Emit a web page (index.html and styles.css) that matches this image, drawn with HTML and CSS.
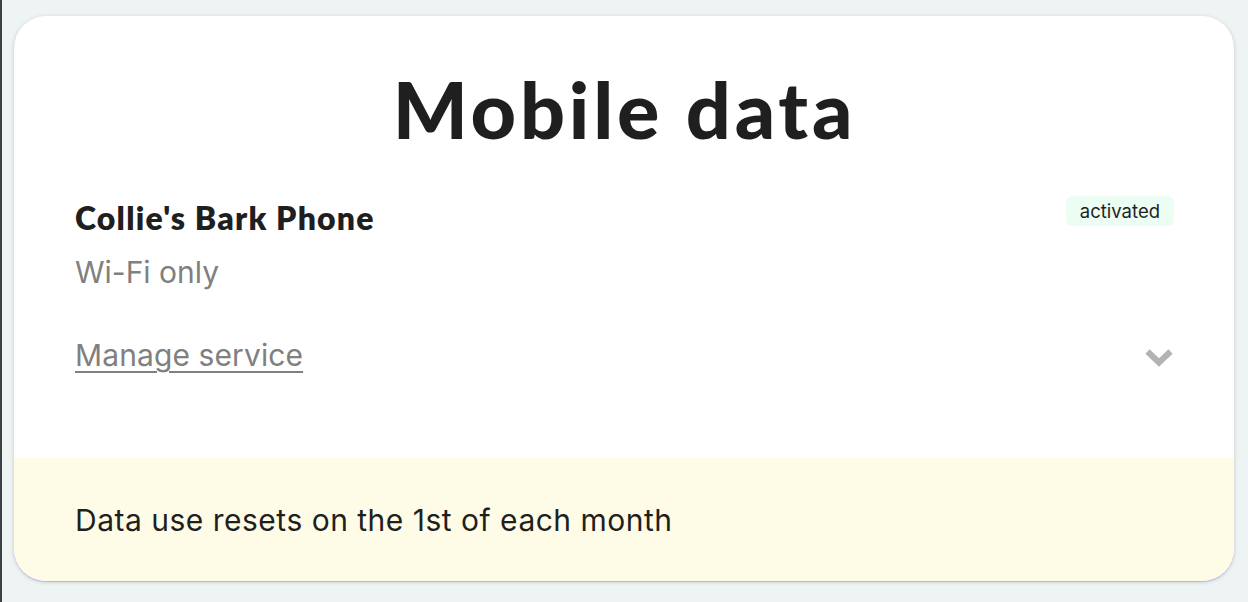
FILE: index.html
```html
<!DOCTYPE html>
<html lang="en">
<head>
<meta charset="utf-8">
<title>Mobile data</title>
<link rel="stylesheet" href="styles.css">
</head>
<body>
<main class="page">
  <section class="card">
    <div class="card-body">
      <h1 class="title">Mobile data</h1>
      <div class="device-row">
        <div class="device-info">
          <h2 class="device-name">Collie's Bark Phone</h2>
          <p class="device-plan">Wi-Fi only</p>
        </div>
        <span class="badge">activated</span>
      </div>
      <div class="manage-row">
        <a class="manage-link" href="#">Manage service</a>
        <svg class="chevron" width="30" height="22" viewBox="0 0 30 22" aria-hidden="true">
          <path d="M3.5 4.5 L15 15.5 L26.5 4.5" fill="none" stroke="#b3b3b3" stroke-width="6" stroke-linecap="butt" stroke-linejoin="miter"/>
        </svg>
      </div>
    </div>
    <div class="card-footer">
      <p class="footer-text">Data use resets on the 1st of each month</p>
    </div>
  </section>
</main>
</body>
</html>
```

FILE: styles.css
```css
html, body {
  margin: 0;
  padding: 0;
}

body {
  background: #eef3f4;
  border-left: 2px solid #3d4245;
  min-height: 602px;
  box-sizing: border-box;
  font-family: "Inter", "Liberation Sans", sans-serif;
  color: #1f1f1f;
}

.page {
  padding: 16px 14px 0 12px;
}

.card {
  background: #ffffff;
  border-radius: 32px;
  overflow: hidden;
  box-shadow: 0 1px 0 #b9b3f0, 0 1px 4px rgba(0, 0, 0, 0.18);
  height: 565px;
  display: flex;
  flex-direction: column;
}

.card-body {
  flex: 1;
  padding: 43px 60px 0 61px;
}

.title {
  margin: 0;
  font-family: "Lato", sans-serif;
  font-weight: 900;
  font-size: 79px;
  line-height: 100px;
  text-align: center;
  color: #1f1f1f;
  letter-spacing: 3.8px;
}

.device-row {
  display: flex;
  justify-content: space-between;
  align-items: flex-start;
  margin-top: 41px;
}

.device-name {
  margin: 0;
  font-family: "Lato", sans-serif;
  font-weight: 800;
  font-size: 32px;
  line-height: 36px;
  letter-spacing: 1.2px;
  color: #1f1f1f;
}

.device-plan {
  margin: 18px 0 0 0;
  font-size: 30px;
  line-height: 36px;
  color: #808080;
}

.badge {
  display: inline-block;
  margin-top: -4px;
  background: #ecfdf3;
  border-radius: 6px;
  font-size: 18.5px;
  line-height: 30px;
  padding: 0 14px 0 14px;
  color: #1f1f1f;
}

.manage-row {
  display: flex;
  justify-content: space-between;
  align-items: center;
  margin-top: 47px;
}

.manage-link {
  font-size: 30px;
  line-height: 36px;
  letter-spacing: 0.1px;
  color: #808080;
  text-decoration: underline;
  text-decoration-thickness: 2px;
  text-underline-offset: 5px;
}

.chevron {
  display: block;
  margin-right: 0;
  margin-top: 6px;
}

.card-footer {
  background: #fefce6;
  height: 123px;
  display: flex;
  align-items: center;
  padding: 0 61px;
}

.footer-text {
  margin: 0;
  font-size: 30px;
  line-height: 36px;
  letter-spacing: 0.5px;
  color: #1f1f1f;
}
```
